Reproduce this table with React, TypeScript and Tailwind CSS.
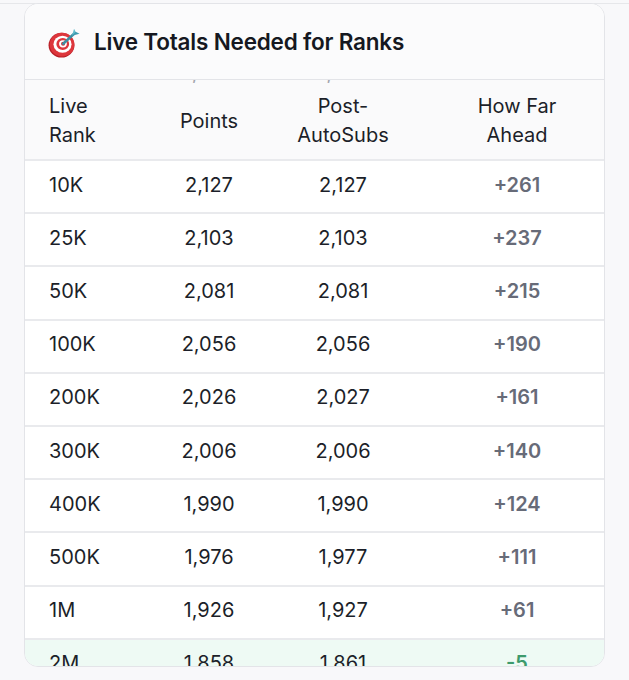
import React from 'react';

type Row = { rank: string; points: string; post: string; ahead: string; good?: boolean };

const rows: Row[] = [
  { rank: '10K', points: '2,127', post: '2,127', ahead: '+261' },
  { rank: '25K', points: '2,103', post: '2,103', ahead: '+237' },
  { rank: '50K', points: '2,081', post: '2,081', ahead: '+215' },
  { rank: '100K', points: '2,056', post: '2,056', ahead: '+190' },
  { rank: '200K', points: '2,026', post: '2,027', ahead: '+161' },
  { rank: '300K', points: '2,006', post: '2,006', ahead: '+140' },
  { rank: '400K', points: '1,990', post: '1,990', ahead: '+124' },
  { rank: '500K', points: '1,976', post: '1,977', ahead: '+111' },
  { rank: '1M', points: '1,926', post: '1,927', ahead: '+61' },
  { rank: '2M', points: '1,858', post: '1,861', ahead: '-5', good: true },
];

const cols = 'grid grid-cols-[124px_120px_148px_189px] items-center';

function TargetIcon() {
  return (
    <svg width="32" height="32" viewBox="0 0 28 28" aria-hidden="true">
      <ellipse cx="11.8" cy="16.8" rx="11.3" ry="10.8" fill="#b81f27" />
      <ellipse cx="12.3" cy="16.3" rx="10.8" ry="10.3" fill="#dd363c" />
      <ellipse cx="12.7" cy="16" rx="7.9" ry="7.5" fill="#fff" />
      <ellipse cx="12.9" cy="15.8" rx="5.6" ry="5.3" fill="#dd363c" />
      <ellipse cx="13.1" cy="15.6" rx="3.4" ry="3.2" fill="#fff" />
      <ellipse cx="13.2" cy="15.5" rx="1.8" ry="1.7" fill="#cf2a31" />
      <path d="M13.3 15.5 L22.3 7.2" stroke="#3d8ea2" strokeWidth="2.2" strokeLinecap="round" />
      <path d="M21 8.6 L22.8 2.3 L24.6 6 Z" fill="#62bccc" />
      <path d="M21 8.6 L27.6 6.7 L24.2 5 Z" fill="#3e9db2" />
    </svg>
  );
}

export default function App() {
  return (
    <div
      className="min-h-[680px] w-[629px] bg-[#f8f8fa] pt-[3px] text-[#1c1f29]"
      style={{ fontFamily: 'Inter, "Noto Sans", sans-serif' }}
    >
      <div className="border-t border-[#e6e7ea]">
        <div className="ml-[24px] -mt-px flex h-[664px] w-[581px] flex-col overflow-hidden rounded-[14px] border border-[#e3e4e8] bg-white">
          <div className="flex h-[76px] shrink-0 items-center gap-[14px] border-b border-[#e3e4e8] bg-[#fbfbfc] pl-[23px]">
            <TargetIcon />
            <h2 className="text-[22.5px] font-semibold tracking-[-0.2px] text-[#151821]">
              Live Totals Needed for Ranks
            </h2>
          </div>

          <div className="bg-[#fafafb]">
            <div className={`${cols} h-[3px] overflow-hidden text-[20px] leading-[20px] text-[#a4a6ae]`}>
              <div className="-mt-[17px] pl-[24px]">1M</div>
              <div className="-mt-[17px] text-center">1,926</div>
              <div className="-mt-[17px] text-center">1,927</div>
              <div className="-mt-[17px] pl-[11px] text-center font-semibold">+61</div>
            </div>
            <div className={`${cols} h-[76px] text-[20px] leading-[29px] text-[#1c1f29]`}>
              <div className="pl-[24px]">
                Live
                <br />
                Rank
              </div>
              <div className="text-center">Points</div>
              <div className="text-center">
                Post-
                <br />
                AutoSubs
              </div>
              <div className="pl-[11px] text-center">
                How Far
                <br />
                Ahead
              </div>
            </div>
          </div>

          {rows.map((r) => (
            <div
              key={r.rank}
              className={`${cols} h-[53.2px] shrink-0 border-t-2 border-[#e9eaed] pb-[4px] text-[20px] ${
                r.good ? 'bg-[#eefaf4]' : 'bg-white'
              }`}
            >
              <div className="pl-[24px]">{r.rank}</div>
              <div className="text-center">{r.points}</div>
              <div className="text-center">{r.post}</div>
              <div
                className={`pl-[11px] text-center font-semibold ${
                  r.good ? 'text-[#3d9a6c]' : 'text-[#676b78]'
                }`}
              >
                {r.ahead}
              </div>
            </div>
          ))}
        </div>
      </div>
    </div>
  );
}
